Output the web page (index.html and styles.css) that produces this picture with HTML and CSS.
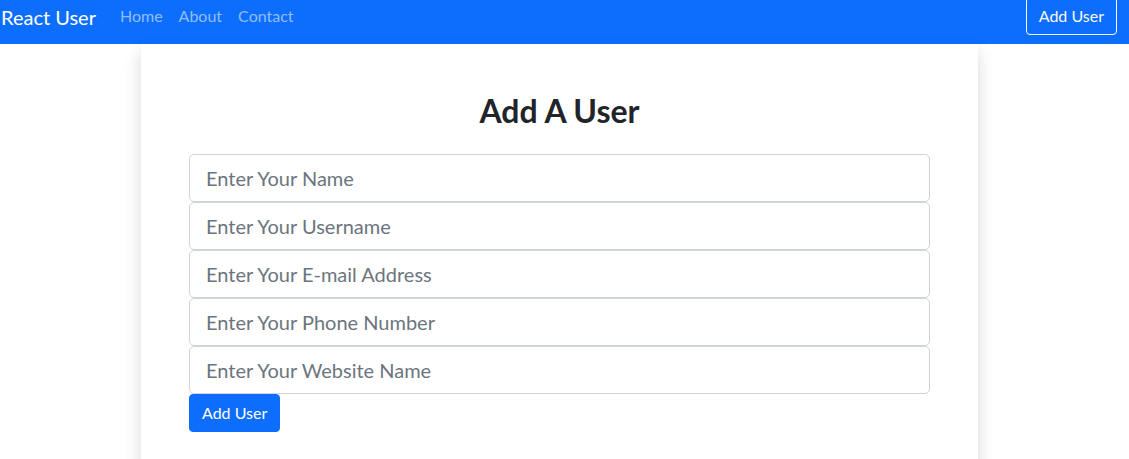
FILE: index.html
```html
<!DOCTYPE html>
<html lang="en">
<head>
<meta charset="utf-8">
<title>React User</title>
<link rel="stylesheet" href="styles.css">
</head>
<body>
<nav class="navbar">
  <a class="brand" href="#">React User</a>
  <ul class="nav">
    <li><a class="nav-link" href="#">Home</a></li>
    <li><a class="nav-link" href="#">About</a></li>
    <li><a class="nav-link" href="#">Contact</a></li>
  </ul>
  <a class="btn-outline" href="#">Add User</a>
</nav>
<main class="card">
  <h2 class="title">Add A User</h2>
  <form class="form">
    <input class="field" type="text" placeholder="Enter Your Name">
    <input class="field" type="text" placeholder="Enter Your Username">
    <input class="field" type="email" placeholder="Enter Your E-mail Address">
    <input class="field" type="text" placeholder="Enter Your Phone Number">
    <input class="field" type="text" placeholder="Enter Your Website Name">
    <button class="btn-primary" type="button">Add User</button>
  </form>
</main>
</body>
</html>
```

FILE: styles.css
```css
* { box-sizing: border-box; }
html, body { margin: 0; padding: 0; }
body {
  font-family: Lato, "Noto Sans", sans-serif;
  font-size: 16px;
  line-height: 1.5;
  color: #212529;
  background: #fff;
  overflow: hidden;
}
.navbar {
  height: 44px;
  background: #0d6efd;
  display: flex;
  align-items: center;
  padding: 0 12px 12px 1px;
}
.brand {
  font-size: 20px;
  line-height: 30px;
  color: #fff;
  text-decoration: none;
  margin-right: 16px;
  margin-top: 2px;
}
.nav {
  list-style: none;
  display: flex;
  margin: 0;
  padding: 0;
  flex: 1;
}
.nav-link {
  display: block;
  padding: 8px;
  line-height: 24px;
  color: rgba(255,255,255,0.55);
  text-decoration: none;
}
.btn-outline {
  display: inline-block;
  padding: 6px 12px;
  line-height: 24px;
  border: 1px solid #f8f9fa;
  border-radius: 4px;
  color: #f8f9fa;
  text-decoration: none;
}
.card {
  width: 837px;
  margin: 0 auto 0 141px;
  padding: 48px;
  background: #fff;
  box-shadow: 0 8px 16px rgba(0,0,0,0.15);
}
.title {
  margin: 0 0 24px;
  text-align: center;
  font-size: 32px;
  line-height: 38.4px;
  font-weight: 700;
}
.form { display: flex; flex-direction: column; align-items: flex-start; }
.field {
  display: block;
  width: 100%;
  height: 48px;
  padding: 8px 16px;
  font-family: inherit;
  font-size: 20px;
  line-height: 30px;
  color: #212529;
  border: 1px solid #ced4da;
  border-radius: 5px;
  margin: 0;
}
.field::placeholder { color: #6c757d; opacity: 1; }
.btn-primary {
  font-family: inherit;
  font-size: 16px;
  line-height: 24px;
  padding: 6px 12px;
  border: 1px solid #0d6efd;
  background: #0d6efd;
  color: #fff;
  border-radius: 4px;
}
```
